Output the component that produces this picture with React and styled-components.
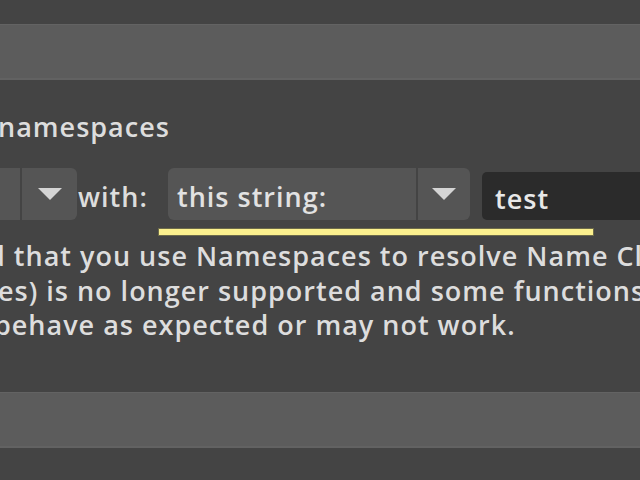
import React from "react";
import styled, { createGlobalStyle } from "styled-components";

const Global = createGlobalStyle`
  html, body {
    margin: 0;
    padding: 0;
    width: 640px;
    height: 480px;
    overflow: hidden;
    background: #444444;
  }
  body {
    font-family: "Open Sans", "Noto Sans", sans-serif;
    color: #dddddd;
  }
`;

const Page = styled.div`
  width: 640px;
  height: 480px;
  overflow: hidden;
  display: flex;
  flex-direction: column;
  background: #444444;
`;

const Band = styled.div`
  flex: none;
  margin-top: ${(p) => p.$top}px;
  height: 56px;
  box-sizing: border-box;
  background: #5c5c5c;
  border-top: 1px solid #636363;
  border-bottom: 2px solid #626262;
`;

const textFont = `
  font-size: 27px;
  font-weight: 600;
  letter-spacing: 1px;
  white-space: nowrap;
`;

const Heading = styled.div`
  ${textFont}
  margin-top: 30px;
  margin-left: -2px;
  line-height: 34px;
`;

const Row = styled.div`
  margin-top: 24px;
  height: 52px;
  display: flex;
  align-items: stretch;
`;

const Combo = styled.div`
  flex: none;
  display: flex;
  gap: 2px;
  margin-left: ${(p) => p.$left}px;
`;

const ComboField = styled.div`
  ${textFont}
  width: ${(p) => p.$w}px;
  box-sizing: border-box;
  background: #555555;
  border-radius: 6px 0 0 6px;
  padding-left: 9px;
  padding-top: 4px;
  display: flex;
  align-items: center;
  color: #e2e2e2;
`;

const ComboArrow = styled.div`
  width: ${(p) => p.$w}px;
  background: #555555;
  border-radius: 0 6px 6px 0;
  display: flex;
  align-items: center;
  justify-content: center;
`;

const Label = styled.div`
  ${textFont}
  flex: none;
  width: 90px;
  display: flex;
  align-items: center;
  padding-left: 1px;
  padding-top: 4px;
`;

const TextField = styled.div`
  ${textFont}
  flex: none;
  margin-left: 12px;
  margin-top: 4px;
  width: 180px;
  background: #2b2b2b;
  border-radius: 5px;
  box-sizing: border-box;
  padding-left: 13px;
  padding-top: 4px;
  display: flex;
  align-items: center;
  color: #e8e8e8;
`;

const Highlight = styled.div`
  margin-top: 8px;
  margin-left: 158px;
  width: 436px;
  height: 8px;
  box-sizing: border-box;
  background: #fbf08e;
  border: 1px solid #6c6a4a;
`;

const Para = styled.div`
  margin-top: 3px;
  display: flex;
  flex-direction: column;
`;

const Line = styled.div`
  ${textFont}
  margin-left: ${(p) => p.$shift}px;
  line-height: 34.5px;
`;

const Arrow = () => (
  <svg width="26" height="14" viewBox="0 0 26 14">
    <path d="M1 1 L25 1 L13 13 Z" fill="#d4d4d4" />
  </svg>
);

export default function App() {
  return (
    <>
      <Global />
      <Page>
        <Band $top={24} />
        <Heading>namespaces</Heading>
        <Row>
          <Combo $left={-40}>
            <ComboField $w={60} />
            <ComboArrow $w={55}>
              <Arrow />
            </ComboArrow>
          </Combo>
          <Label>with:</Label>
          <Combo $left={0}>
            <ComboField $w={248}>this string:</ComboField>
            <ComboArrow $w={52}>
              <Arrow />
            </ComboArrow>
          </Combo>
          <TextField>test</TextField>
        </Row>
        <Highlight />
        <Para>
          <Line $shift={-12}>d that you use Namespaces to resolve Name Clashes.</Line>
          <Line $shift={-2}>es) is no longer supported and some functions</Line>
          <Line $shift={-6}>behave as expected or may not work.</Line>
        </Para>
        <Band $top={49} />
      </Page>
    </>
  );
}
